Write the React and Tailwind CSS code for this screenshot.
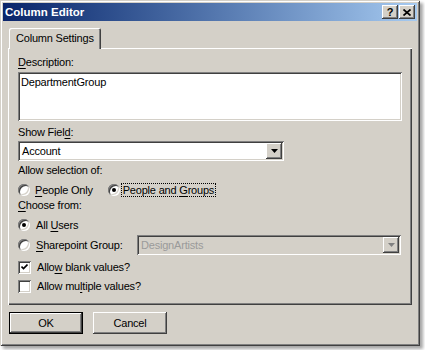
import React from "react";

const raised =
  "shadow-[inset_-1px_-1px_#404040,inset_1px_1px_#ffffff,inset_-2px_-2px_#808080,inset_2px_2px_#d4d0c8]";
const sunken =
  "shadow-[inset_1px_1px_#808080,inset_-1px_-1px_#ffffff,inset_2px_2px_#404040,inset_-2px_-2px_#d4d0c8]";

function Radio({ checked }) {
  return (
    <span className={`relative block w-[12px] h-[12px] rounded-full bg-white shrink-0 ${sunken}`}>
      {checked && (
        <span className="absolute left-[4px] top-[4px] w-[4px] h-[4px] rounded-full bg-black" />
      )}
    </span>
  );
}

function Checkbox({ checked }) {
  return (
    <span className={`flex items-center justify-center w-[13px] h-[13px] bg-white shrink-0 ${sunken}`}>
      {checked && (
        <svg width="7" height="7" viewBox="0 0 7 7">
          <path d="M0.5 2.5 L2.5 4.5 L6.5 0.5" stroke="#000" strokeWidth="1.6" fill="none" />
        </svg>
      )}
    </span>
  );
}

function Arrow({ disabled }) {
  return (
    <span className={`flex items-center justify-center w-[16px] h-full bg-[#d4d0c8] shrink-0 ${raised}`}>
      <svg width="7" height="4" viewBox="0 0 7 4">
        <path d="M0 0h7L3.5 4z" fill={disabled ? "#808080" : "#000"} />
      </svg>
    </span>
  );
}

const U = ({ children }) => <span className="underline underline-offset-[2px]">{children}</span>;

export default function App() {
  return (
    <div className="w-[425px] h-[350px] bg-white overflow-hidden font-['Liberation_Sans',Arial,sans-serif] text-[11px] leading-[13px] text-black tracking-[-0.2px]">
      <div className="w-[420px] h-[346px] p-[3px] bg-[#d4d0c8] shadow-[inset_1px_1px_#d4d0c8,inset_-1px_-1px_#404040,inset_2px_2px_#ffffff,inset_-2px_-2px_#808080,3px_3px_3px_rgba(0,0,0,0.35)]">
        {/* title bar */}
        <div className="h-[18px] flex items-center justify-between pl-[2px] pr-[2px] bg-linear-to-r from-[#0a246a] to-[#a6caf0]">
          <span className="text-white font-bold text-[11.5px] tracking-normal">Column Editor</span>
          <div className="flex gap-[1px]">
            <span className={`w-[16px] h-[14px] bg-[#d4d0c8] flex items-center justify-center font-bold text-[11px] leading-none ${raised}`}>
              ?
            </span>
            <span className={`w-[16px] h-[14px] bg-[#d4d0c8] flex items-center justify-center ${raised}`}>
              <svg width="8" height="7" viewBox="0 0 8 7">
                <path d="M0.5 0.5 L7.5 6.5 M7.5 0.5 L0.5 6.5" stroke="#000" strokeWidth="1.7" />
              </svg>
            </span>
          </div>
        </div>

        <div className="px-[5px] pt-[7px]">
          {/* tab */}
          <div className="ml-[1px] w-[92px] h-[21px] flex items-center pl-[7px] bg-[#d4d0c8] rounded-t-[2px] shadow-[inset_1px_1px_#ffffff,inset_-1px_0_#404040,inset_-2px_0_#808080] relative z-10 -mb-[1px]">
            Column Settings
          </div>

          {/* panel */}
          <div className="h-[257px] pt-[8px] pl-[10px] pr-[10px] bg-[#d4d0c8] shadow-[inset_1px_1px_#ffffff,inset_-1px_-1px_#404040,inset_-2px_-2px_#808080]">
            <div className="h-[13px]">
              <U>D</U>escription:
            </div>
            <div className={`mt-[3px] h-[49px] bg-white px-[3px] pt-[4px] ${sunken}`}>DepartmentGroup</div>

            <div className="mt-[5px] h-[13px]">
              Show Fiel<U>d</U>:
            </div>
            <div className={`mt-[2px] w-[266px] h-[20px] bg-white p-[2px] flex items-center ${sunken}`}>
              <span className="flex-1 pl-[2px]">Account</span>
              <Arrow />
            </div>

            <div className="mt-[3px] h-[13px]">Allow selection of:</div>
            <div className="mt-[6px] h-[14px] flex items-center">
              <Radio />
              <span className="ml-[5px]">
                <U>P</U>eople Only
              </span>
              <span className="ml-[15px]">
                <Radio checked />
              </span>
              <span className="ml-[1px] border border-dotted border-black px-[1px] leading-[12px]">
                People and <U>G</U>roups
              </span>
            </div>

            <div className="mt-[2px] h-[13px]">
              <U>C</U>hoose from:
            </div>
            <div className="mt-[6px] h-[14px] flex items-center">
              <Radio checked />
              <span className="ml-[6px]">
                All <U>U</U>sers
              </span>
            </div>
            <div className="mt-[3px] h-[20px] flex items-center">
              <Radio />
              <span className="ml-[6px] w-[101px]">
                <U>S</U>harepoint Group:
              </span>
              <div className={`w-[264px] h-[20px] bg-[#d4d0c8] p-[2px] flex items-center ${sunken}`}>
                <span className="flex-1 pl-[2px] text-[#9a9a9a]">DesignArtists</span>
                <Arrow disabled />
              </div>
            </div>

            <div className="mt-[6px] h-[13px] flex items-center">
              <Checkbox checked />
              <span className="ml-[6px]">
                Allo<U>w</U> blank values?
              </span>
            </div>
            <div className="mt-[6px] h-[13px] flex items-center">
              <Checkbox />
              <span className="ml-[6px]">
                Allow mu<U>l</U>tiple values?
              </span>
            </div>
          </div>

          {/* buttons */}
          <div className="mt-[7px] ml-[1px] flex gap-[10px]">
            <div className="w-[74px] h-[22px] border border-black">
              <div className={`w-full h-full flex items-center justify-center bg-[#d4d0c8] ${raised}`}>OK</div>
            </div>
            <div className={`w-[74px] h-[22px] flex items-center justify-center bg-[#d4d0c8] ${raised}`}>Cancel</div>
          </div>
        </div>
      </div>
    </div>
  );
}
